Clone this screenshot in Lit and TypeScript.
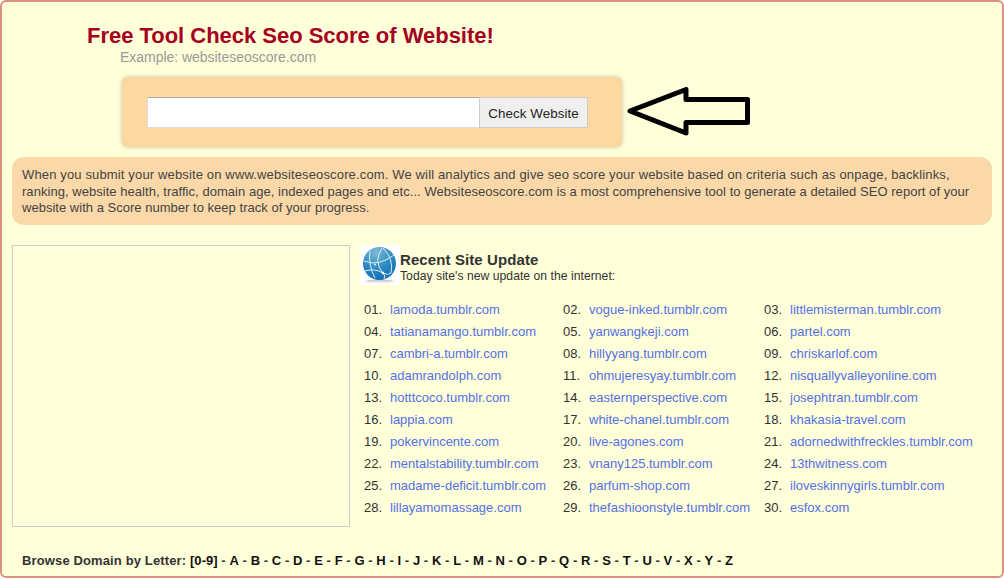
import { LitElement, html, css } from "lit";
import { customElement } from "lit/decorators.js";

const sites = ["lamoda.tumblr.com","vogue-inked.tumblr.com","littlemisterman.tumblr.com","tatianamango.tumblr.com","yanwangkeji.com","partel.com","cambri-a.tumblr.com","hillyyang.tumblr.com","chriskarlof.com","adamrandolph.com","ohmujeresyay.tumblr.com","nisquallyvalleyonline.com","hotttcoco.tumblr.com","easternperspective.com","josephtran.tumblr.com","lappia.com","white-chanel.tumblr.com","khakasia-travel.com","pokervincente.com","live-agones.com","adornedwithfreckles.tumblr.com","mentalstability.tumblr.com","vnany125.tumblr.com","13thwitness.com","madame-deficit.tumblr.com","parfum-shop.com","iloveskinnygirls.tumblr.com","lillayamomassage.com","thefashioonstyle.tumblr.com","esfox.com"];
const letters = ["A","B","C","D","E","F","G","H","I","J","K","L","M","N","O","P","Q","R","S","T","U","V","X","Y","Z"];

@customElement("app-root")
export class AppRoot extends LitElement {
  static styles = css`
    :host { display: block; width: 1004px; height: 579px; overflow: hidden; font-family: "Liberation Sans", Arial, sans-serif; }
    .frame { box-sizing: border-box; width: 1004px; height: 578px; background: #ffffd9; border: 2px solid #dc9080; border-radius: 6px; padding: 20px 10px 0; }
    h1 { margin: 0 0 0 75px; font-size: 22px; line-height: 27px; font-weight: bold; color: #a50021; letter-spacing: -0.02px; }
    .example { margin-left: 108px; font-size: 14px; line-height: 16px; color: #999999; letter-spacing: -0.03px; }
    .search-row { display: flex; align-items: center; margin: 12px 0 0 110px; }
    .search { box-sizing: border-box; width: 500px; height: 70px; background: #fed8a0; border-radius: 6px; box-shadow: 0 0 4px rgba(120,120,120,.45); padding: 20px 25px; display: flex; }
    .input { box-sizing: border-box; width: 333px; height: 31px; background: #fff; border: 1px solid #dddde0; border-top-color: #aaa; }
    .btn { box-sizing: border-box; width: 109px; height: 31px; padding-top: 2px; background: #efefef; border: 1px solid #ccc; color: #222; font-size: 13.33px; letter-spacing: 0.1px; display: flex; align-items: center; justify-content: center; margin-left: -1px; }
    .arrow { display: block; margin-left: 3px; }
    .desc { box-sizing: border-box; width: 980px; height: 68px; margin-top: 10px; background: #fad8a8; border-radius: 12px; padding: 10px; font-size: 13px; line-height: 16.5px; color: #444; }
    .line { display: block; white-space: nowrap; }
    .l1 { letter-spacing: 0.145px; }
    .l2 { letter-spacing: 0.042px; }
    .l3 { letter-spacing: 0.02px; }
    .main { display: flex; margin-top: 20px; }
    .ad { box-sizing: border-box; width: 338px; height: 282px; border: 1px solid #cccccc; }
    .right { margin-left: 10px; flex: 1; }
    .head { display: flex; height: 40px; }
    .globe { display: block; width: 40px; height: 40px; background: #fff; }
    .head h2 { margin: 6px 0 0; font-size: 15px; line-height: 18px; color: #333; font-weight: bold; letter-spacing: 0.1px; }
    .head p { margin: 0; font-size: 12.2px; line-height: 14px; color: #333; letter-spacing: 0.02px; }
    .list { display: grid; grid-template-columns: 199px 201px 1fr; grid-auto-rows: 22px; margin: 14px 0 0 4px; }
    .item { display: flex; font-size: 13px; line-height: 22px; color: #333; white-space: nowrap; }
    .num { width: 26px; }
    .item a { color: #5470e8; text-decoration: none; }
    .browse { margin: 26px 0 0 10px; font-size: 13px; line-height: 16px; font-weight: bold; color: #333; white-space: pre; letter-spacing: 0.13px; }
    .letters { color: #333; letter-spacing: 0.06px; }
    .letters b { color: #111; }
  `;
  render() {
    return html`<div class="frame">
      <h1>Free Tool Check Seo Score of Website!</h1>
      <div class="example">Example: websiteseoscore.com</div>
      <div class="search-row">
        <div class="search"><div class="input"></div><div class="btn">Check Website</div></div>
        <svg class="arrow" width="126" height="50" viewBox="0 0 126 50">
          <path d="M5 24 L61 2.5 L61 12.5 L122.5 12.5 L122.5 35.5 L61 35.5 L61 46 Z" fill="#ffffd9" stroke="#000" stroke-width="5" stroke-linejoin="round"/>
        </svg>
      </div>
      <div class="desc">
        <span class="line l1">When you submit your website on www.websiteseoscore.com. We will analytics and give seo score your website based on criteria such as onpage, backlinks,</span>
        <span class="line l2">ranking, website health, traffic, domain age, indexed pages and etc... Websiteseoscore.com is a most comprehensive tool to generate a detailed SEO report of your</span>
        <span class="line l3">website with a Score number to keep track of your progress.</span>
      </div>
      <div class="main">
        <div class="ad"></div>
        <div class="right">
          <div class="head">
            <svg class="globe" viewBox="0 0 40 40">
              <defs>
                <radialGradient id="g" cx="0.4" cy="0.15" r="0.95"><stop offset="0" stop-color="#7fbcd8"/><stop offset="0.5" stop-color="#2f8cc2"/><stop offset="1" stop-color="#0f66b0"/></radialGradient>
                <linearGradient id="s" x1="0" x2="0" y1="0" y2="1"><stop offset="0" stop-color="#bbb"/><stop offset="1" stop-color="#fff"/></linearGradient>
              </defs>
              <ellipse cx="19.5" cy="36.5" rx="14" ry="2" fill="url(#s)"/>
              <circle cx="19.5" cy="18.5" r="16.5" fill="url(#g)"/>
              <path d="M4 16 Q18 22 34 10 M22 3 Q13 17 23 28 Q26 31 24 34 M23 3 Q34 14 31 28 M5 26 Q15 23 23 28 Q28 31 31 28 M10 6 Q8 20 15 33" fill="none" stroke="#dcEEf7" stroke-width="1"/>
              <circle cx="23" cy="28" r="1.2" fill="#fff"/>
              <circle cx="15" cy="19.5" r="0.9" fill="#fff"/>
            </svg>
            <div><h2>Recent Site Update</h2><p>Today site's new update on the internet:</p></div>
          </div>
          <div class="list">
            ${sites.map((s, i) => html`<div class="item"><span class="num">${String(i + 1).padStart(2, "0")}.</span><a>${s}</a></div>`)}
          </div>
        </div>
      </div>
      <div class="browse">Browse Domain by Letter: <span class="letters"><b>[0-9]</b> - ${letters.map((l, i) => html`<b>${l}</b>${i < letters.length - 1 ? " - " : ""}`)}</span></div>
    </div>`;
  }
}
